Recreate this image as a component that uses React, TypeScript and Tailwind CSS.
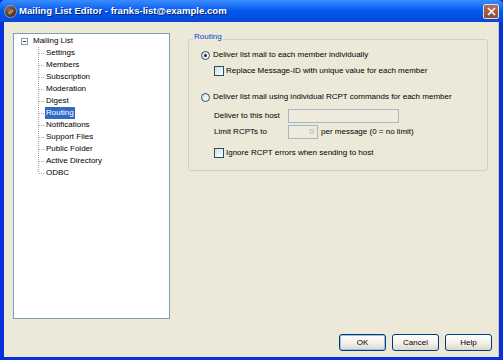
import React from "react";

const FONT = "font-['Liberation_Sans',Arial,sans-serif]";

function Radio({ checked }: { checked?: boolean }) {
  return (
    <span className="w-[9px] h-[9px] shrink-0 rounded-full border border-[#1C5180] bg-gradient-to-br from-[#DCDCD4] to-white flex items-center justify-center">
      {checked && <span className="w-[3px] h-[3px] rounded-full bg-[#2A2A2A]" />}
    </span>
  );
}

function Check() {
  return <span className="w-[10px] h-[10px] shrink-0 border border-[#1C5180] bg-gradient-to-br from-[#DCDCD4] to-white" />;
}

function Connector({ last }: { last?: boolean }) {
  return (
    <svg width="7" height="12" className="shrink-0">
      <line x1="0.5" y1="0" x2="0.5" y2={last ? 6 : 12} stroke="#A8A8A8" strokeDasharray="1 1" />
      <line x1="1" y1="6.5" x2="7" y2="6.5" stroke="#A8A8A8" strokeDasharray="1 1" />
    </svg>
  );
}

const children = [
  "Settings",
  "Members",
  "Subscription",
  "Moderation",
  "Digest",
  "Routing",
  "Notifications",
  "Support Files",
  "Public Folder",
  "Active Directory",
  "ODBC",
];

function Button({ label, def }: { label: string; def?: boolean }) {
  return (
    <div
      className={`w-[47px] h-[17px] rounded-[3px] border border-[#003C74] bg-gradient-to-b from-white via-[#F3F2EC] to-[#DCD8CB] flex items-center justify-center text-[8px] text-black ${
        def ? "shadow-[inset_0_0_0_1px_#9DBBF1]" : ""
      }`}
    >
      {label}
    </div>
  );
}

export default function App() {
  return (
    <div className={`w-[503px] h-[360px] flex flex-col bg-[#0831D9] ${FONT}`}>
      {/* Title bar */}
      <div className="h-[22px] shrink-0 flex items-center bg-gradient-to-b from-[#3A8CFF] via-[#0058EE] to-[#0648D8] rounded-t-[5px]">
        <svg width="13" height="13" viewBox="0 0 13 13" className="ml-[4px] mt-[1px] shrink-0">
          <defs>
            <radialGradient id="ic" cx="0.4" cy="0.35" r="0.7">
              <stop offset="0" stopColor="#9A6E55" />
              <stop offset="1" stopColor="#3E2216" />
            </radialGradient>
          </defs>
          <circle cx="6.5" cy="6.5" r="6" fill="url(#ic)" stroke="#D8D0E8" strokeWidth="0.6" />
          <g transform="rotate(-40 6.5 6.5)">
            <rect x="3.6" y="4.9" width="5.8" height="3.4" fill="#C9A88E" stroke="#4A2A1C" strokeWidth="0.5" />
            <path d="M3.6 4.9 L6.5 7 L9.4 4.9" fill="none" stroke="#4A2A1C" strokeWidth="0.5" />
          </g>
        </svg>
        <span className="ml-[2px] text-white font-bold text-[9.6px] [text-shadow:1px_1px_0_#0A1E6E] whitespace-nowrap">
          Mailing List Editor - franks-list@example.com
        </span>
        <div className="ml-auto mr-[4px] w-[16px] h-[15px] rounded-[2px] border border-[#E8DCD8] bg-gradient-to-b from-[#B0705C] to-[#8E4A38] flex items-center justify-center">
          <svg width="9" height="9" viewBox="0 0 9 9">
            <path d="M1 1 L8 8 M8 1 L1 8" stroke="white" strokeWidth="1.6" />
          </svg>
        </div>
      </div>

      {/* Body */}
      <div className="flex-1 flex flex-col ml-[4px] mr-[4px] mb-[3px] bg-[#ECE9D8] border-r border-[#C9C4B4]">
        <div className="flex pt-[11px] pl-[9px]">
          {/* Tree */}
          <div className="w-[157px] h-[286px] border border-[#7F9DB9] bg-white pt-[1px] text-[8px] text-black">
            <div className="h-[12px] flex items-center">
              <span className="ml-[7px] w-[7px] h-[7px] border border-[#919B9C] bg-white flex items-center justify-center shrink-0">
                <span className="w-[3px] h-px bg-[#1E3C6E]" />
              </span>
              <span className="ml-[5px] whitespace-nowrap">Mailing List</span>
            </div>
            {children.map((c, i) => (
              <div key={c} className="h-[12px] flex items-center pl-[24px]">
                <Connector last={i === children.length - 1} />
                <span
                  className={`h-[12px] flex items-center px-[1px] whitespace-nowrap ${
                    c === "Routing" ? "bg-[#316AC5] text-white" : ""
                  }`}
                >
                  {c}
                </span>
              </div>
            ))}
          </div>

          {/* Group box */}
          <div className="ml-[18px] mt-[6px] w-[300px] h-[132px] relative border border-[#D0D0BF] rounded-[3px] text-[8px] text-black">
            <span className="absolute top-[-8px] left-[4px] px-[1px] bg-[#ECE9D8] text-[#0046D5] leading-[10px]">
              Routing
            </span>
            <div className="flex flex-col pt-[9px]">
              <div className="h-[12px] flex items-center pl-[12px] gap-[3px]">
                <Radio checked />
                <span className="whitespace-nowrap">Deliver list mail to each member individually</span>
              </div>
              <div className="h-[12px] mt-[4px] flex items-center pl-[25px] gap-[2px]">
                <Check />
                <span className="whitespace-nowrap">Replace Message-ID with unique value for each member</span>
              </div>
              <div className="h-[12px] mt-[14px] flex items-center pl-[12px] gap-[3px]">
                <Radio />
                <span className="whitespace-nowrap">Deliver list mail using individual RCPT commands for each member</span>
              </div>
              <div className="h-[14px] mt-[6px] flex items-center pl-[25px]">
                <span className="w-[74px] whitespace-nowrap">Deliver to this host</span>
                <span className="w-[111px] h-[14px] border border-[#A7B6CB] bg-[#EEEBDC]" />
              </div>
              <div className="h-[14px] mt-[2px] flex items-center pl-[25px]">
                <span className="w-[74px] whitespace-nowrap">Limit RCPTs to</span>
                <span className="w-[30px] h-[14px] border border-[#A7B6CB] bg-[#EEEBDC] flex items-center justify-end pr-[3px] text-[#ACA899]">
                  0
                </span>
                <span className="ml-[3px] whitespace-nowrap">per message (0 = no limit)</span>
              </div>
              <div className="h-[12px] mt-[8px] flex items-center pl-[25px] gap-[2px]">
                <Check />
                <span className="whitespace-nowrap">Ignore RCPT errors when sending to host</span>
              </div>
            </div>
          </div>
        </div>

        {/* Buttons */}
        <div className="mt-[15px] flex justify-end gap-[6px] pr-[6px]">
          <Button label="OK" def />
          <Button label="Cancel" />
          <Button label="Help" />
        </div>
      </div>
    </div>
  );
}
